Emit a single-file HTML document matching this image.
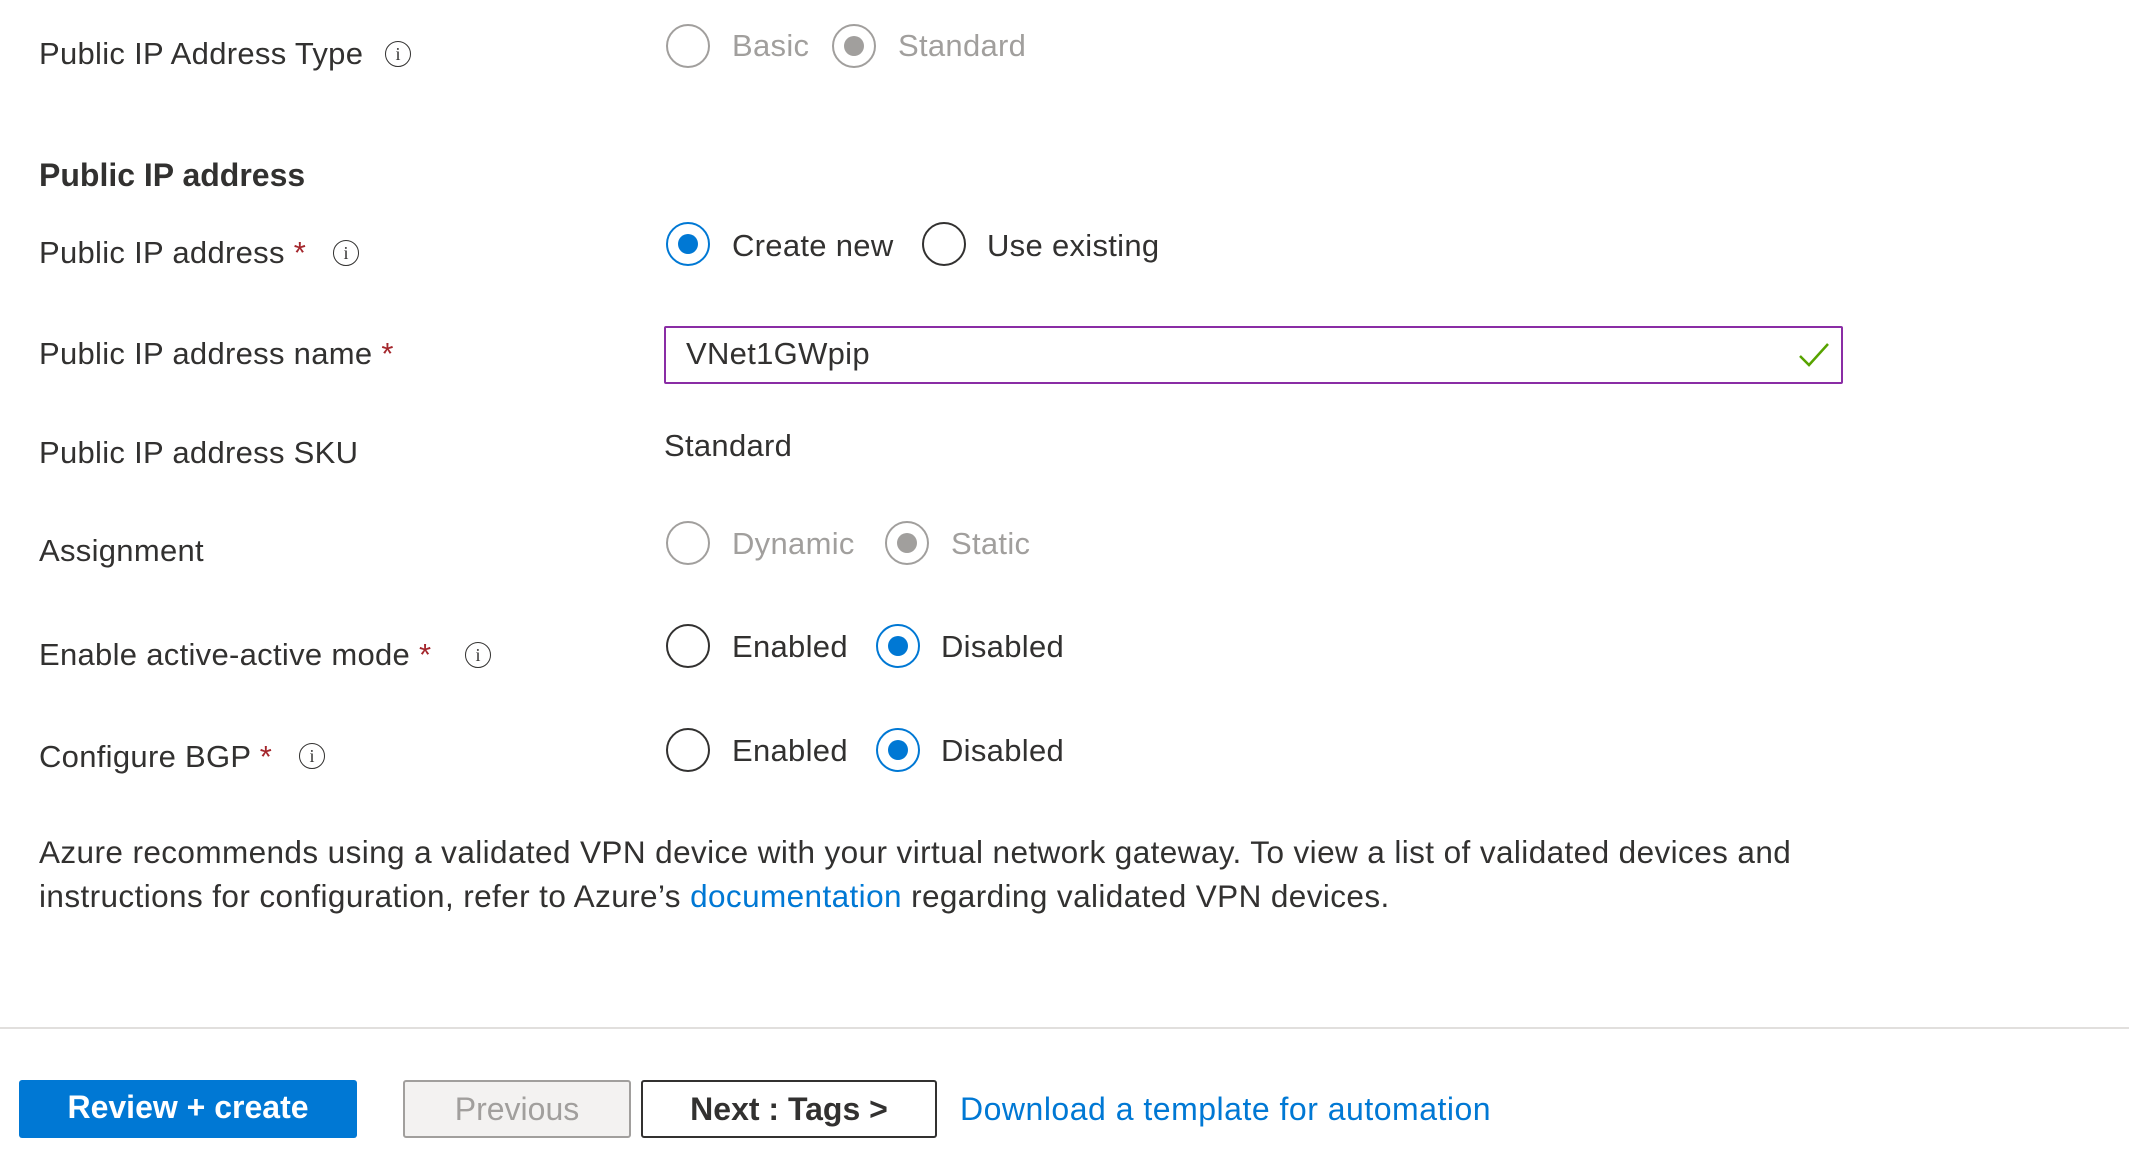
<!DOCTYPE html>
<html><head><meta charset="utf-8"><style>
html,body{margin:0;padding:0;background:#fff;width:2129px;height:1176px;overflow:hidden;font-family:"Liberation Sans",sans-serif;color:#323130}
.a{position:absolute;white-space:nowrap;font-size:31px;line-height:40px;letter-spacing:0.3px}
.lbl{left:39px}
.req{color:#a4262c}
.info{position:absolute;width:26px;height:26px;border:1.5px solid #323130;border-radius:50%;box-sizing:border-box;font-size:18px;line-height:24px;text-align:center;font-family:"Liberation Serif",serif}
.r{position:absolute;width:44px;height:44px;border-radius:50%;border:2px solid #323130;box-sizing:border-box}
.r.dis{border-color:#a19f9d}
.r.dis.on::after{content:"";position:absolute;left:10px;top:10px;width:20px;height:20px;border-radius:50%;background:#a19f9d}
.r.on.blue{border-color:#0078d4}
.r.blue::after{content:"";position:absolute;left:10px;top:10px;width:20px;height:20px;border-radius:50%;background:#0078d4}
.g{color:#a19f9d}
.btn{position:absolute;top:1080px;height:58px;box-sizing:border-box;font-size:32px;font-weight:bold;text-align:center;line-height:54px;border-radius:3px}
</style></head><body>

<div class="a lbl" style="top:34px">Public IP Address Type</div>
<div class="info" style="left:385px;top:41px">i</div>
<div class="r dis" style="left:666px;top:24px"></div><div class="a g" style="left:732px;top:26px">Basic</div>
<div class="r dis on" style="left:832px;top:24px"></div><div class="a g" style="left:898px;top:26px">Standard</div>

<div class="a lbl" style="top:155px;font-weight:bold;font-size:32px;letter-spacing:0">Public IP address</div>

<div class="a lbl" style="top:233px">Public IP address <span class="req">*</span></div>
<div class="info" style="left:333px;top:240px">i</div>
<div class="r on blue" style="left:666px;top:222px"></div><div class="a" style="left:732px;top:226px">Create new</div>
<div class="r" style="left:922px;top:222px"></div><div class="a" style="left:987px;top:226px">Use existing</div>

<div class="a lbl" style="top:334px">Public IP address name <span class="req">*</span></div>
<div style="position:absolute;left:664px;top:326px;width:1179px;height:58px;border:2px solid #8a2da5;box-sizing:border-box;border-radius:2px"></div>
<div class="a" style="left:686px;top:334px">VNet1GWpip</div>
<svg style="position:absolute;left:1797px;top:340px" width="34" height="30" viewBox="0 0 34 30"><path d="M3 16 L12 25 L31 4" fill="none" stroke="#57a300" stroke-width="2.5"/></svg>

<div class="a lbl" style="top:433px">Public IP address SKU</div>
<div class="a" style="left:664px;top:426px">Standard</div>

<div class="a lbl" style="top:531px">Assignment</div>
<div class="r dis" style="left:666px;top:521px"></div><div class="a g" style="left:732px;top:524px">Dynamic</div>
<div class="r dis on" style="left:885px;top:521px"></div><div class="a g" style="left:951px;top:524px">Static</div>

<div class="a lbl" style="top:635px">Enable active-active mode <span class="req">*</span></div>
<div class="info" style="left:465px;top:642px">i</div>
<div class="r" style="left:666px;top:624px"></div><div class="a" style="left:732px;top:627px">Enabled</div>
<div class="r on blue" style="left:876px;top:624px"></div><div class="a" style="left:941px;top:627px">Disabled</div>

<div class="a lbl" style="top:737px">Configure BGP <span class="req">*</span></div>
<div class="info" style="left:299px;top:743px">i</div>
<div class="r" style="left:666px;top:728px"></div><div class="a" style="left:732px;top:731px">Enabled</div>
<div class="r on blue" style="left:876px;top:728px"></div><div class="a" style="left:941px;top:731px">Disabled</div>

<div class="a lbl" style="top:830px;font-size:31.5px;letter-spacing:0.4px;line-height:44px;white-space:normal;width:1900px">Azure recommends using a validated VPN device with your virtual network gateway. To view a list of validated devices and<br>instructions for configuration, refer to Azure’s <span style="color:#0078d4">documentation</span> regarding validated VPN devices.</div>

<div style="position:absolute;left:0;top:1027px;width:2129px;height:2px;background:#e1dfdd"></div>

<div class="btn" style="left:19px;width:338px;background:#0078d4;color:#fff">Review + create</div>
<div class="btn" style="left:403px;width:228px;background:#f3f2f1;border:2px solid #a19f9d;color:#a19f9d;font-weight:normal">Previous</div>
<div class="btn" style="left:641px;width:296px;background:#fff;border:2px solid #323130;color:#323130">Next : Tags &gt;</div>
<div class="a" style="left:960px;top:1089px;font-size:32px;letter-spacing:0.5px;color:#0078d4">Download a template for automation</div>
</body></html>
